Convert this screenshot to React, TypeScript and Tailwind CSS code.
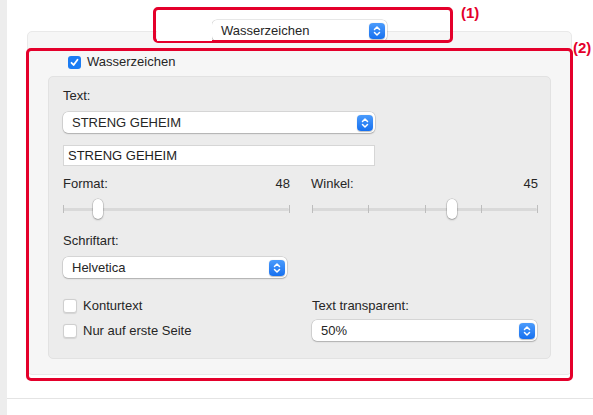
import React from 'react';

const Chevrons: React.FC = () => (
  <span className="flex h-[16px] w-[16px] items-center justify-center rounded-[4px] bg-gradient-to-b from-[#4a9bfc] to-[#1570ef] shadow-[0_0.5px_1px_rgba(0,0,0,0.25)]">
    <svg width="8" height="12" viewBox="0 0 8 12" fill="none" stroke="white" strokeWidth="1.5" strokeLinecap="round" strokeLinejoin="round">
      <path d="M1.5 4.5 L4 2 L6.5 4.5" />
      <path d="M1.5 7.5 L4 10 L6.5 7.5" />
    </svg>
  </span>
);

const Select: React.FC<{ value: string; className?: string }> = ({ value, className = '' }) => (
  <div className={`flex h-[21px] items-center justify-between rounded-[5px] bg-white pl-[9px] pr-[2px] text-[13px] text-[#262626] shadow-[0_0_0_0.5px_rgba(0,0,0,0.18),0_1px_1.5px_rgba(0,0,0,0.18)] ${className}`}>
    <span>{value}</span>
    <Chevrons />
  </div>
);

const Checkbox: React.FC<{ checked?: boolean; label: string }> = ({ checked, label }) => (
  <label className="flex h-[16px] items-center gap-[6px] text-[13px] text-[#262626]">
    {checked ? (
      <span className="flex h-[13px] w-[13px] items-center justify-center rounded-[3px] bg-[#1b7cf3]">
        <svg width="9" height="9" viewBox="0 0 9 9" fill="none" stroke="white" strokeWidth="1.8" strokeLinecap="round" strokeLinejoin="round">
          <path d="M1.5 4.8 L3.6 7 L7.5 1.8" />
        </svg>
      </span>
    ) : (
      <span className="h-[14px] w-[14px] rounded-[3px] border border-[#cfcfcf] bg-white shadow-[0_0.5px_1px_rgba(0,0,0,0.1)]" />
    )}
    <span>{label}</span>
  </label>
);

const Slider: React.FC<{ value: number; ticks: number }> = ({ value, ticks }) => (
  <div className="relative h-[20px] w-full">
    <div className="absolute left-0 right-0 top-[9px] h-[3px] rounded-full bg-[#d9d9d9]" />
    {Array.from({ length: ticks }).map((_, i) => (
      <div
        key={i}
        className="absolute top-[6px] h-[8px] w-px bg-[#bdbdbd]"
        style={{ left: `${(i / (ticks - 1)) * 100}%` }}
      />
    ))}
    <div
      className="absolute top-0 h-[20px] w-[10px] -translate-x-1/2 rounded-full bg-white shadow-[0_0_0_0.5px_rgba(0,0,0,0.2),0_1px_2px_rgba(0,0,0,0.25)]"
      style={{ left: `${value * 100}%` }}
    />
  </div>
);

const App: React.FC = () => {
  return (
    <div className="relative flex h-[415px] w-[593px] overflow-hidden bg-white font-['Liberation_Sans',Arial,sans-serif]">
      <div className="w-[7px] shrink-0 bg-[#ededed]" />

      <div className="flex flex-1 flex-col">
        <div className="pl-[20px] pr-[21px] pt-[31px]">
          <div className="h-[344px] rounded-[5px] border border-[#e9e9e9] bg-[#f6f6f6]">
            {/* tab popup */}
            <div className="ml-[184px] -mt-[12px] w-[175px]">
              <Select value="Wasserzeichen" className="h-[20px]" />
            </div>

            <div className="ml-[40px] mt-[13px]">
              <Checkbox checked label="Wasserzeichen" />
            </div>

            <div className="mx-[20px] mt-[6px] rounded-[5px] border border-[#e2e2e2] bg-[#ececec] pb-[17px] pl-[14px] pr-[12px] pt-[11px] text-[13px] text-[#262626]">
              <div className="h-[16px] leading-[16px]">Text:</div>
              <Select value="STRENG GEHEIM" className="mt-[8px] w-[312px]" />
              <div className="mt-[12px] flex h-[21px] w-[312px] items-center border border-[#d6d6d6] bg-white pl-[4px] text-[13px] text-[#1e1e1e]">
                STRENG GEHEIM
              </div>

              <div className="mt-[10px] grid grid-cols-[227px_227px] gap-x-[21px]">
                <div>
                  <div className="flex h-[16px] items-center justify-between leading-[16px]">
                    <span>Format:</span>
                    <span>48</span>
                  </div>
                  <div className="mt-[7px] pr-[1px]">
                    <Slider value={0.153} ticks={2} />
                  </div>
                </div>
                <div>
                  <div className="flex h-[16px] items-center justify-between leading-[16px]">
                    <span>Winkel:</span>
                    <span>45</span>
                  </div>
                  <div className="mt-[7px] pl-[1px] pr-[1px]">
                    <Slider value={0.622} ticks={5} />
                  </div>
                </div>

                <div className="col-span-2 mt-[14px]">
                  <div className="h-[16px] leading-[16px]">Schriftart:</div>
                  <Select value="Helvetica" className="mt-[8px] h-[20px] w-[224px]" />
                </div>

                <div className="mt-[20px] flex flex-col gap-[9px]">
                  <Checkbox label="Konturtext" />
                  <Checkbox label="Nur auf erste Seite" />
                </div>
                <div className="mt-[20px] pl-[1px] pr-[1px]">
                  <div className="h-[16px] leading-[16px]">Text transparent:</div>
                  <Select value="50%" className="mt-[6px]" />
                </div>
              </div>
            </div>
          </div>
        </div>

        <div className="mt-auto h-[17px] border-t border-[#e4e4e4]" />
      </div>

      {/* annotation (1) */}
      <div className="absolute left-[153px] top-[7px] h-[36px] w-[300px] rounded-[5px] border-[3px] border-[#e4002b]">
        <div className="ml-[1px] mt-[1px] h-[30px] w-[55px] bg-white" />
      </div>
      <span className="absolute left-[461px] top-[4px] text-[15px] font-bold leading-[17px] text-[#e4002b]">(1)</span>

      {/* annotation (2) */}
      <div className="absolute left-[26px] top-[48px] h-[333px] w-[547px] rounded-[5px] border-[3px] border-[#e4002b]" />
      <span className="absolute left-[573px] top-[39px] text-[15px] font-bold leading-[17px] text-[#e4002b]">(2)</span>
    </div>
  );
};

export default App;
